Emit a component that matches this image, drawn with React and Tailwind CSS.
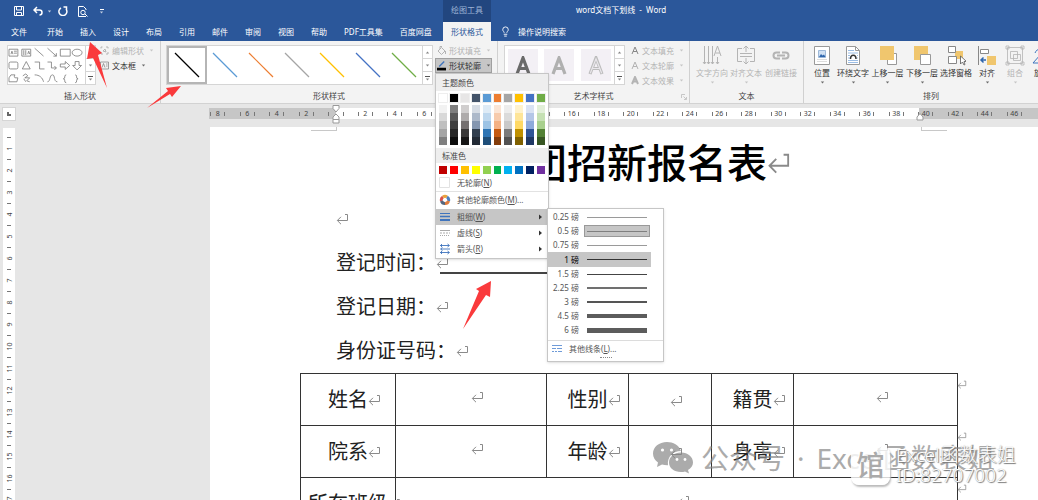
import { Lightbulb } from "lucide-react";

const tabs = ["文件", "开始", "插入", "设计", "布局", "引用", "邮件", "审阅", "视图", "帮助", "PDF工具集", "百度网盘"];

const lineStyles = [
  "text-black",
  "text-[#5b9bd5]",
  "text-[#ed7d31]",
  "text-[#a5a5a5]",
  "text-[#ffc000]",
  "text-[#4472c4]",
  "text-[#70ad47]",
];

const themeColors = [
  ["bg-white", "bg-[#f2f2f2]", "bg-[#d8d8d8]", "bg-[#bfbfbf]", "bg-[#a5a5a5]", "bg-[#7f7f7f]"],
  ["bg-black", "bg-[#7f7f7f]", "bg-[#595959]", "bg-[#3f3f3f]", "bg-[#262626]", "bg-[#0c0c0c]"],
  ["bg-[#e7e6e6]", "bg-[#d0cece]", "bg-[#aeabab]", "bg-[#757070]", "bg-[#3a3838]", "bg-[#171616]"],
  ["bg-[#44546a]", "bg-[#d6dce4]", "bg-[#adb9ca]", "bg-[#8496b0]", "bg-[#323f4f]", "bg-[#222a35]"],
  ["bg-[#5b9bd5]", "bg-[#deebf6]", "bg-[#bdd7ee]", "bg-[#9cc3e5]", "bg-[#2e75b5]", "bg-[#1e4e79]"],
  ["bg-[#ed7d31]", "bg-[#fbe5d5]", "bg-[#f7cbac]", "bg-[#f4b183]", "bg-[#c55a11]", "bg-[#833c0b]"],
  ["bg-[#a5a5a5]", "bg-[#ededed]", "bg-[#dbdbdb]", "bg-[#c9c9c9]", "bg-[#7b7b7b]", "bg-[#525252]"],
  ["bg-[#ffc000]", "bg-[#fff2cc]", "bg-[#fee599]", "bg-[#ffd965]", "bg-[#bf9000]", "bg-[#7f6000]"],
  ["bg-[#4472c4]", "bg-[#d9e2f3]", "bg-[#b4c6e7]", "bg-[#8eaadb]", "bg-[#2f5496]", "bg-[#1f3864]"],
  ["bg-[#70ad47]", "bg-[#e2efd9]", "bg-[#c5e0b3]", "bg-[#a8d08d]", "bg-[#538135]", "bg-[#375623]"],
];

const standardColors = [
  "bg-[#c00000]",
  "bg-[#ff0000]",
  "bg-[#ffc000]",
  "bg-[#ffff00]",
  "bg-[#92d050]",
  "bg-[#00b050]",
  "bg-[#00b0f0]",
  "bg-[#0070c0]",
  "bg-[#002060]",
  "bg-[#7030a0]",
];

const weights = [
  { label: "0.25 磅", line: "h-px bg-[#9a9a9a]" },
  { label: "0.5 磅", line: "h-px bg-[#808080]", current: true },
  { label: "0.75 磅", line: "h-px bg-[#9a9a9a]" },
  { label: "1 磅", line: "h-px bg-[#333]", hover: true },
  { label: "1.5 磅", line: "h-px bg-[#444]" },
  { label: "2.25 磅", line: "h-[2px] bg-[#707070]" },
  { label: "3 磅", line: "h-[2px] bg-[#555]" },
  { label: "4.5 磅", line: "h-[4px] bg-[#5c5c5c]" },
  { label: "6 磅", line: "h-[5px] bg-[#5c5c5c]" },
];

const Caret = ({ className = "" }) => (
  <svg viewBox="0 0 5 3" className={`h-[3px] w-[5px] shrink-0 opacity-70 ${className}`} aria-hidden="true">
    <path d="M0.8 0.5h3.4L2.5 2.4z" fill="currentColor" />
  </svg>
);

const ReturnMark = ({ className = "h-[12px] w-[13px]" }) => (
  <svg viewBox="0 0 13 12" className={`inline-block shrink-0 text-[#8a8a8a] ${className}`} fill="none" stroke="currentColor" aria-hidden="true">
    <path d="M9 1.5h2.5v6H1.5M5 3.8L1.3 7.5L5 11.2" />
  </svg>
);

const GalleryScroll = () => (
  <div className="flex w-[10px] shrink-0 flex-col border-l border-[#d5d5d5] text-[#555]">
    <button aria-label="上一行" className="flex flex-1 items-center justify-center border-b border-[#d5d5d5]">
      <Caret className="rotate-180" />
    </button>
    <button aria-label="下一行" className="flex flex-1 items-center justify-center border-b border-[#d5d5d5]">
      <Caret />
    </button>
    <button aria-label="其他" className="flex flex-1 flex-col items-center justify-center gap-px">
      <span className="h-px w-[5px] bg-[#555]" />
      <Caret />
    </button>
  </div>
);

const Group = ({ label, className = "", launcher, children }) => (
  <section className={`flex shrink-0 flex-col border-r border-[#d0d0d0] ${className}`}>
    <div className="flex h-[48px] items-start pt-[2px]">{children}</div>
    <div className="relative h-[14px] text-center leading-[14px] text-[#444]">
      {label}
      {launcher && (
        <svg viewBox="0 0 6 6" className="absolute right-[2px] bottom-[3px] size-[6px]" fill="none" stroke="#bbb" strokeWidth="0.8" aria-hidden="true">
          <path d="M0.5 4V0.5H4M2.5 2.5L5 5M5.5 3v2.5H3" />
        </svg>
      )}
    </div>
  </section>
);

const SmallButton = ({ icon, label, disabled, className = "" }) => (
  <button
    disabled={disabled}
    className={`flex h-[15px] items-center gap-[3px] whitespace-nowrap ${disabled ? "text-[#b4b4b4]" : "text-[#333]"} ${className}`}
  >
    {icon}
    <span>{label}</span>
    <Caret className="ml-[2px]" />
  </button>
);

const BigButton = ({ icon, label, disabled, caret = true, className = "w-[34px]" }) => (
  <button className={`flex shrink-0 flex-col items-center whitespace-nowrap ${disabled ? "text-[#b4b4b4]" : "text-[#333]"} ${className}`} disabled={disabled}>
    <svg viewBox="0 0 20 21" className="h-[21px] w-[20px]" fill="none" stroke="currentColor" aria-hidden="true">
      {icon}
    </svg>
    <span className="leading-[14px]">{label}</span>
    {caret && <Caret className="mt-[1px]" />}
  </button>
);

const ShapeGallery = () => (
  <div className="mt-[2px] ml-[7px] flex h-[40px] w-[89px] border border-[#d5d5d5] bg-white">
    <svg viewBox="0 0 78 38" className="h-[38px] w-[78px]" fill="none" stroke="#777" strokeWidth="0.8" aria-hidden="true">
      <path d="M1 3h9v7H1zM3 8l1-3l1 3M6 5h3M6 7h3M14 3h9v7h-9zM16 4v5M18 4v5M20 8l1-3l1 3" />
      <path d="M27 2l9 8M40 2l9 8M49 7v3h-3" />
      <path d="M53 3h10v7H53z" />
      <ellipse cx="70" cy="6.5" rx="5" ry="3.5" />
      <rect x="1" y="16" width="9" height="7" rx="1.5" />
      <path d="M14.5 23L18.5 15.5L22.5 23zM27 16h5v7h5M40 16h4v6h5M47 20l2 2l-2 2" />
      <path d="M53 18h5v-2.500l4.500 4l-4.500 4V21h-5zM68 15.500h4v4h2.500L70 24l-4.500-4.500H68z" />
      <path d="M3 29h4c-1 2-1 3 1 3h2l-1 4H1v-4zM15 30l3-2l2 2l-3 2l5 0l-3 3l3 1M16 33l2 3M27 29c5 0 8 3 9 7M40 36c3 0 2-7 5-7s1 7 5 7" />
      <path d="M59 29c-3 0 0 4-3 4c3 0 0 4 3 4M68 29c3 0 0 4 3 4c-3 0 0 4-3 4" />
    </svg>
    <GalleryScroll />
  </div>
);

const SwatchRow = ({ children }) => <div className="flex gap-[3px] px-[3px]">{children}</div>;

const MenuItem = ({ icon, label, accel, tail = "", arrow, active }) => (
  <button role="menuitem" className={`flex h-[16px] w-full items-center pl-[3px] text-left text-[#555] ${active ? "bg-[#c6c6c6]" : ""}`}>
    <svg viewBox="0 0 12 12" className="size-[12px]" fill="none" aria-hidden="true">
      {icon}
    </svg>
    <span className="ml-[6px] flex-1">
      {label}(<u>{accel}</u>){tail}
    </span>
    {arrow && (
      <svg viewBox="0 0 3 6" className="mr-[6px] h-[6px] w-[3px]" aria-hidden="true">
        <path d="M0 0.5L3 3L0 5.5z" fill="#333" />
      </svg>
    )}
  </button>
);

const WeightMenu = () => (
  <div role="menu" className="absolute top-[134px] left-full -ml-px w-[117px] border border-[#c6c6c6] bg-white pt-px shadow-sm">
    <div className="flex flex-col">
      {weights.map((w) => (
        <button
          key={w.label}
          role="menuitem"
          className={`mr-[12px] flex items-center ${w.hover ? "h-[15px] bg-[#c6c6c6] font-medium text-[#222]" : "h-[14px] text-[#555]"}`}
        >
          <span className="w-[31px] text-right">{w.label}</span>
          <span className={`ml-[5px] flex h-[12px] w-[66px] items-center px-[2px] ${w.current ? "border border-[#999] bg-[#c6c6c6]" : "border border-transparent"}`}>
            <span className={`w-full ${w.line}`} />
          </span>
        </button>
      ))}
    </div>
    <div className="mt-[3px] border-t border-[#dcdcdc]">
      <MenuItem
        icon={<path d="M1 2.500h10M1 5.500h4m1 0h5M1 8.500h2m1 0h2m1 0h4" stroke="#6f9bd8" />}
        label="其他线条"
        accel="L"
        tail="..."
      />
    </div>
    <div className="pb-[3px]">
      <span className="mx-auto block w-[12px] border-t border-dotted border-[#888]" />
    </div>
  </div>
);

const OutlineMenu = () => (
  <div role="menu" className="absolute top-full left-0 z-20 w-[114px] border border-[#c6c6c6] bg-white pb-px shadow-sm">
    <div className="mb-[3px] h-[17px] bg-[#eee] pl-[6px] leading-[17px] text-[#444]">主题颜色</div>
    <SwatchRow>
      {themeColors.map(([base]) => (
        <button key={base} aria-label="主题颜色" className={`size-[8px] outline outline-[#eee] ${base}`} />
      ))}
    </SwatchRow>
    <div className="h-[3px]" />
    <SwatchRow>
      {themeColors.map(([base, ...tints]) => (
        <div key={base} className="flex w-[8px] flex-col">
          {tints.map((tint) => (
            <button key={tint} aria-label="主题颜色" className={`h-[8px] ${tint}`} />
          ))}
        </div>
      ))}
    </SwatchRow>
    <div className="my-[3px] h-[15px] bg-[#eee] pl-[6px] leading-[15px] text-[#444]">标准色</div>
    <SwatchRow>
      {standardColors.map((color) => (
        <button key={color} aria-label="标准色" className={`size-[8px] ${color}`} />
      ))}
    </SwatchRow>
    <div className="border-b border-[#e2e2e2] pt-px">
      <MenuItem icon={<path d="M0.5 0.5h10v10h-10z" stroke="#e2e2e2" />} label="无轮廓" accel="N" />
    </div>
    <div className="pb-px">
      <MenuItem
        icon={
          <g strokeWidth="3">
            <path d="M2.5 7A3.5 3.5 0 0 1 4 3" stroke="#d9534a" />
            <path d="M4 3A3.5 3.5 0 0 1 8 3" stroke="#e9a23b" />
            <path d="M8 3A3.5 3.5 0 0 1 9.5 7" stroke="#4a7fc1" />
            <path d="M9.5 7A3.5 3.5 0 0 1 6 9.5" stroke="#e07b3c" />
            <path d="M6 9.5A3.5 3.5 0 0 1 2.5 7" stroke="#55657d" />
          </g>
        }
        label="其他轮廓颜色"
        accel="M"
        tail="..."
      />
    </div>
    <MenuItem
      icon={
        <g stroke="#3f74bd">
          <path d="M1 2.5h10" />
          <path d="M1 5.5h10" strokeWidth="1.5" />
          <path d="M1 9h10" strokeWidth="2" />
        </g>
      }
      label="粗细"
      accel="W"
      arrow
      active
    />
    <MenuItem
      icon={<path d="M1 3.5h10M1 6h2m1 0h2m1 0h2m1 0h1M1 8.5h1m1 0h1m1 0h1m1 0h1m1 0h1" stroke="#aaa" />}
      label="虚线"
      accel="S"
      arrow
    />
    <MenuItem
      icon={<path d="M1 2.5h9M8.5 1l2 1.500l-2 1.500M11 6H2M3.500 4.500l-2 1.500l2 1.500M1 9.500h9M8.500 8l2 1.500l-2 1.500M2.500 8v3M2.500 1v3" stroke="#3f74bd" strokeWidth="0.9" />}
      label="箭头"
      accel="R"
      arrow
    />
    <WeightMenu />
  </div>
);

const WordArt = ({ className, hollow }) => (
  <button className="flex h-[32px] w-[30px] items-center justify-center bg-[#f3f0f5]" aria-label="艺术字">
    <svg viewBox="0 0 16 19" className={`h-[19px] w-[16px] ${className}`} fill="none" aria-hidden="true">
      <path d="M2 18L8 2L14 18M4.500 12.500h7" stroke="currentColor" strokeWidth="3.2" />
      {hollow && <path d="M2.300 17.200L8 2.800L13.700 17.200M4.500 12.500h7" stroke="#e9e6eb" strokeWidth="1.2" />}
    </svg>
  </button>
);

const LetterIcon = ({ className = "" }) => (
  <svg viewBox="0 0 8 9" className="h-[9px] w-[8px]" fill="none" stroke="currentColor" aria-hidden="true">
    <path d="M1 8L4 1L7 8M2 5.5h4" className={className} />
  </svg>
);

const Ribbon = () => (
  <div className="relative z-10 flex h-[63px] border-b border-[#d2d2d2] bg-[#f3f3f3]">
    <Group label="插入形状" className="w-[161px]">
      <ShapeGallery />
      <div className="ml-[4px]">
        <SmallButton
          disabled
          label="编辑形状"
          icon={
            <svg viewBox="0 0 9 9" className="size-[9px]" fill="none" stroke="currentColor" aria-hidden="true">
              <path d="M1 2.5V1h1.500M6 1h2v1.500M8 6v2H6M3 8H1V6M3 5l2-2l1 3z" />
            </svg>
          }
        />
        <SmallButton
          label="文本框"
          icon={
            <svg viewBox="0 0 9 9" className="size-[9px]" fill="none" stroke="#888" aria-hidden="true">
              <path d="M0.5 1h8v7h-8zM2 6.500l1.500-4l1.500 4M6 3h1.500M6 5h1.500" strokeWidth="0.8" />
            </svg>
          }
        />
      </div>
    </Group>

    <Group label="形状样式" className="w-[337px]">
      <div className="mt-[2px] ml-[5px] flex h-[40px] w-[267px] border border-[#d5d5d5] bg-white">
        <div className="flex flex-1">
          {lineStyles.map((color, i) => (
            <button
              key={color}
              aria-label="线条样式"
              className={`flex flex-1 items-center justify-center ${i === 0 ? "border-2 border-[#b5b5b5]" : ""}`}
            >
              <svg viewBox="0 0 26 26" className={`size-[26px] shrink-0 ${color}`} aria-hidden="true">
                <path d="M1 1L25 25" stroke="currentColor" strokeWidth="1.2" />
              </svg>
            </button>
          ))}
        </div>
        <GalleryScroll />
      </div>
      <div className="ml-[2px] w-[57px]">
        <SmallButton
          disabled
          className="pl-[2px]"
          label="形状填充"
          icon={
            <svg viewBox="0 0 9 9" className="size-[9px]" fill="none" stroke="currentColor" aria-hidden="true">
              <path d="M1 5l3.500-3.500L8 5L4.500 8.500zM3 3V0.500h2M8.500 5v3" />
            </svg>
          }
        />
        <div className="relative">
          <SmallButton
            className="w-[57px] border border-[#a0a0a0] bg-[#c6c6c6] pl-[1px]"
            label="形状轮廓"
            icon={
              <svg viewBox="0 0 10 11" className="h-[11px] w-[10px]" fill="none" aria-hidden="true">
                <path d="M2.5 6.5L8 1" stroke="#3f74bd" strokeWidth="1.5" />
                <path d="M0 8h10v3H0z" fill="#000" />
              </svg>
            }
          />
          <OutlineMenu />
        </div>
      </div>
    </Group>

    <Group label="艺术字样式" className="w-[192px]" launcher>
      <div className="mt-[2px] ml-[6px] flex h-[40px] w-[121px] border border-[#d5d5d5] bg-white">
        <div className="flex flex-1 items-center justify-around">
          <WordArt className="text-[#6a6a6a]" />
          <WordArt className="text-[#b0b0b0]" />
          <WordArt className="text-[#bcbcbc]" hollow />
        </div>
        <GalleryScroll />
      </div>
      <div className="ml-[6px]">
        <SmallButton disabled label="文本填充" icon={<LetterIcon className="stroke-[#888]" />} />
        <SmallButton disabled label="文本轮廓" icon={<LetterIcon />} />
        <SmallButton disabled label="文本效果" icon={<LetterIcon className="stroke-2" />} />
      </div>
    </Group>

    <Group label="文本" className="w-[114px]">
      <div className="mt-[2px] ml-[5px] flex">
        <BigButton disabled label="文字方向" icon={<path d="M2.500 1v18M6.500 1v18M10.500 1v18M1 17l1.500 2l1.500-2M5 17l1.500 2l1.500-2M9 17l1.500 2l1.500-2M12 11l3.500-10L19 11M13.500 8h4.500M15.500 12v7M14 17l1.500 2l1.500-2" />} />
        <BigButton disabled label="对齐文本" icon={<path d="M6 3.500H1.500v13H6M14 3.500h4.500v13H14M4 8.500h12M4 11.500h12M10 1v6M7.500 3.500L10 1l2.500 2.500M10 13v6M7.500 16.500L10 19l2.500-2.500" />} />
        <BigButton disabled caret={false} label="创建链接" className="w-[36px]" icon={<path d="M9 7.500H5.500a3 3 0 0 0 0 6H9M11 7.500h3.500a3 3 0 0 1 0 6H11M6 10.500h8" strokeWidth="2" />} />
      </div>
    </Group>

    <Group label="排列" className="w-[255px]">
      <div className="mt-[2px] ml-[4px] flex">
        <BigButton
          label="位置"
          className="w-[28px]"
          icon={
            <g stroke="#999">
              <path d="M2.500 1.500h15v18h-15z" fill="#fff" />
              <path d="M5 14.500h10M5 16.500h10" stroke="#ddd" />
              <path d="M6.500 5.500h7v7h-7z" fill="#cfe0f3" stroke="#9db8d8" />
              <path d="M7 12l2-3l1.500 1.500l1.500-1l1.500 2.500z" fill="#2f66ad" stroke="none" />
            </g>
          }
        />
        <BigButton
          label="环绕文字"
          icon={
            <g stroke="#999">
              <path d="M3.500 1.500h9l4 4v14h-13z" fill="#fff" />
              <path d="M12.500 1.500v4h4" />
              <path d="M5 5.500h6M5 8h10M5 15.500h10M5 17.500h10M5 10.500h2M5 13h2M14 10.500h1M14 13h1" stroke="#9bbde4" />
              <path d="M7.500 14c0-5 5.500-5 5.500 0" stroke="#333" strokeWidth="1.5" />
            </g>
          }
        />
        <BigButton
          label="上移一层"
          className="w-[35px]"
          icon={
            <g stroke="#999">
              <path d="M9.500 8.500h9v11h-9z" fill="#fff" />
              <path d="M2 1h14v14H2z" fill="#f0c66e" stroke="none" />
            </g>
          }
        />
        <BigButton
          label="下移一层"
          icon={
            <g stroke="#999">
              <path d="M2 1h14v14H2z" fill="#f0c66e" stroke="none" />
              <path d="M8.500 9.500h10v10h-10z" fill="#fff" />
            </g>
          }
        />
        <BigButton
          caret={false}
          label="选择窗格"
          icon={
            <g stroke="#888">
              <path d="M9 6h8v8H9z" fill="#f0c66e" stroke="none" />
              <path d="M2.500 1.500h7v6h-7zM2.500 11.500h8v7h-8z" fill="#fff" />
              <path d="M14.500 11v8l2-2l1.500 3l1-.5l-1-3h2.500z" fill="#fff" stroke="#555" strokeWidth="0.8" />
            </g>
          }
        />
        <BigButton
          label="对齐"
          className="w-[28px]"
          icon={
            <g stroke="#888">
              <path d="M1.500 1v19" />
              <path d="M3.500 4.500h8v4h-8z" fill="#fff" />
              <path d="M10 11h9v9h-9z" fill="#f0c66e" stroke="none" />
              <path d="M9 15H4M6.500 12.500L4 15l2.500 2.500" stroke="#2f66ad" strokeWidth="1.5" />
            </g>
          }
        />
        <BigButton disabled label="组合" className="w-[28px]" icon={<path d="M2.500 2.500h15v16h-15zM5.500 6.500h7v7h-7zM8.500 9.500h7v6h-7zM1 1h3v3H1zM16 1h3v3h-3zM1 17h3v3H1zM16 17h3v3h-3z" strokeWidth="0.8" />} />
        <BigButton label="旋转" className="w-[26px]" icon={<path d="M3 8c2-5 8-6 12-2M11 6h4V2M1 18h16L9 9z" stroke="#3f74bd" />} />
      </div>
    </Group>
  </div>
);

const rulerNumbers = [8, 6, 4, 2, "", ...Array.from({ length: 23 }, (_, i) => (i + 1) * 2)];
const rulerPairs = Array.from({ length: 14 }, (_, i) => rulerNumbers.slice(i * 2, i * 2 + 2));

const HorizontalRuler = () => (
  <div className="flex h-[19px] shrink-0 items-center">
    <button aria-label="制表符" className="ml-[2px] flex size-[14px] items-center justify-center border border-[#d5d5d5] bg-white">
      <span className="size-[4px] border-b-2 border-l-2 border-[#666]" />
    </button>
    <div className="relative ml-[193px] min-w-0 flex-1">
      <div className="flex h-[11px] overflow-hidden bg-[linear-gradient(to_right,#c6c6c6_127px,#fff_127px,#fff_710px,#c6c6c6_710px)] text-[7px] text-[#444]">
        <div className="-ml-[6px] flex">
          {rulerPairs.map((pair, i) => (
            <div key={i} className="grid w-[59px] shrink-0 grid-cols-2">
              {pair.map((n) => (
                <span key={n} className="flex items-center justify-between px-[7px] leading-[11px]">
                  <i className="h-[4px] w-px bg-[#777]" />
                  {n}
                  <i className="h-[4px] w-px bg-[#777]" />
                </span>
              ))}
            </div>
          ))}
        </div>
      </div>
      <svg viewBox="0 0 8 19" className="absolute -top-[3px] left-[123px] h-[19px] w-[8px]" fill="#fff" stroke="#999" aria-hidden="true">
        <path d="M1 0.500h6v3L4 7L1 3.500zM4 9L7 12v2.500H1V12zM1 14.500h6v3.500H1z" />
      </svg>
      <svg viewBox="0 0 8 8" className="absolute top-[5px] left-[707px] size-[8px]" fill="#fff" stroke="#999" aria-hidden="true">
        <path d="M4 0.500L7 4v3H1V4z" />
      </svg>
    </div>
  </div>
);

const VerticalRuler = () => (
  <div className="mt-[5px] ml-[3px] flex w-[12px] shrink-0 flex-col items-center overflow-hidden bg-white pt-[3px] text-[7px] text-[#444]">
    {Array.from({ length: 17 }, (_, i) => (
      <div key={i} className="flex h-[22px] shrink-0 flex-col items-center">
        <i className="mt-[6px] h-px w-[4px] shrink-0 bg-[#777]" />
        <span className="flex h-[21px] w-[12px] shrink-0 -rotate-90 items-center justify-center leading-none">{i + 1}</span>
      </div>
    ))}
  </div>
);

const Field = ({ children }) => <p className="relative flex h-[44px] items-center">{children}</p>;

// the paragraph mark hangs after the text, so it does not count for centring
const Cell = ({ children, raised, end, colSpan }) => (
  <td colSpan={colSpan} className={`relative h-[52px] border border-[#333] p-0 text-center ${raised ? "pb-[8px]" : ""}`}>
    <span className="inline-flex items-center justify-center whitespace-nowrap">
      {children}
      <ReturnMark className="-mr-[13px] h-[12px] w-[13px]" />
    </span>
    {end && <ReturnMark className="absolute top-[6px] left-full h-[9px] w-[10px]" />}
  </td>
);

const Page = () => (
  <main className="relative mt-[4px] min-w-0 flex-1 bg-white text-[20px] text-[#222]">
    <div className="pr-[120px] pl-[126px]">
      <span className="absolute top-0 left-[101px] h-[4px] w-[26px] border-r border-b border-[#c8c8c8]" />
      <span className="absolute top-0 left-[711px] h-[4px] w-[26px] border-b border-l border-[#c8c8c8]" />
      <h1 className="flex h-[70px] items-center justify-center pt-[2px] text-[40px] leading-none font-medium whitespace-nowrap text-black">
        社团招新报名表
        <ReturnMark className="-mr-[24px] h-[22px] w-[24px]" />
      </h1>
      <Field>
        <ReturnMark />
      </Field>
      <Field>
        登记时间：
        <ReturnMark />
        <span className="absolute bottom-[11px] left-[104px] w-[120px] border-b-2 border-[#444]" />
      </Field>
      <Field>
        登记日期：
        <ReturnMark />
      </Field>
      <Field>
        身份证号码：
        <ReturnMark />
      </Field>
    </div>
    <div className="pr-[80px] pl-[90px]">
      <table className="w-full table-fixed border-collapse">
        <colgroup>
          <col className="w-[95px]" />
          <col className="w-[151px]" />
          <col className="w-[82px]" />
          <col className="w-[83px]" />
          <col className="w-[82px]" />
          <col />
        </colgroup>
        <tbody>
          <tr>
            <Cell>姓名</Cell>
            <Cell raised />
            <Cell>性别</Cell>
            <Cell />
            <Cell>籍贯</Cell>
            <Cell raised end />
          </tr>
          <tr>
            <Cell>院系</Cell>
            <Cell raised />
            <Cell>年龄</Cell>
            <Cell />
            <Cell>身高</Cell>
            <Cell raised end />
          </tr>
          <tr>
            <Cell>所在班级</Cell>
            <Cell raised end colSpan={5} />
          </tr>
        </tbody>
      </table>
    </div>
  </main>
);

const Arrow = ({ className, viewBox, points }) => (
  <svg viewBox={viewBox} className={`pointer-events-none absolute z-30 ${className}`} aria-hidden="true">
    <polygon points={points} fill="#fa3a3c" />
  </svg>
);

const Watermarks = () => (
  <>
    <div className="pointer-events-none absolute top-[438px] left-[653px] z-10 flex items-center gap-[8px] whitespace-nowrap text-[#888] opacity-70">
      <svg viewBox="0 0 40 34" className="h-[34px] w-[40px]" aria-hidden="true">
        <path d="M14 1C6 1 0 6 0 12.500c0 4 2 7 5 9L4 26l5-2.500c2 .5 4 .8 6 .7C14 16 20 10 28 10C26 4 20 1 14 1z" fill="currentColor" />
        <path d="M28 11.500c-7 0-12 4.500-12 10S21 31 28 31c1.500 0 3-.2 4-.6l4 2.100l-1-3.500c3-2 5-4.500 5-7.500c0-5.500-5-10-12-10z" fill="currentColor" />
        <g fill="#fff">
          <circle cx="9.500" cy="9" r="1.600" />
          <circle cx="18.500" cy="9" r="1.600" />
          <circle cx="24" cy="18.500" r="1.400" />
          <circle cx="32" cy="18.500" r="1.400" />
        </g>
      </svg>
      <span className="flex gap-[12px] text-[28px] leading-[40px]">
        <span>公众号</span>
        <span>·</span>
        <span>Excel函数表姐</span>
      </span>
    </div>
    <div className="pointer-events-none absolute top-[445px] left-[851px] z-10 flex items-center gap-[6px] whitespace-nowrap">
      <span className="flex size-[39px] items-center justify-center rounded-lg bg-white/80 text-[28px] font-medium text-[#aaa] shadow-[1px_2px_2px_#bbb]">馆</span>
      <span className="text-[19px] leading-[20px] font-light text-white [text-shadow:1px_1px_1px_#777,0_0_1px_#999]">
        Excel函数表姐
        <br />
        ID:82707002
      </span>
    </div>
  </>
);

const TitleBar = () => (
  <header className="flex h-[22px] text-white">
    <div className="flex w-[443px] items-center pl-[14px]">
      <button aria-label="保存">
        <svg viewBox="0 0 10 10" className="size-[10px]" fill="none" stroke="currentColor" aria-hidden="true">
          <path d="M0.500 0.500h9v9h-9zM2.500 0.500v3.500h5V0.500M2.500 9.500V6.500h5v3" />
        </svg>
      </button>
      <button aria-label="撤消" className="ml-[9px] flex items-center gap-[4px]">
        <svg viewBox="0 0 10 10" className="size-[10px]" fill="none" stroke="currentColor" strokeWidth="1.5" aria-hidden="true">
          <path d="M4 1L1 4l3 3M1 4h5.500a2.500 2.500 0 0 1 0 5" />
        </svg>
        <Caret />
      </button>
      <button aria-label="重复" className="ml-[6px]">
        <svg viewBox="0 0 10 10" className="size-[10px]" fill="none" stroke="currentColor" strokeWidth="1.5" aria-hidden="true">
          <path d="M3 2A4 4 0 1 0 8 3M5.500 1h3v3" />
        </svg>
      </button>
      <button aria-label="打印预览" className="ml-[9px]">
        <svg viewBox="0 0 11 11" className="size-[11px]" fill="none" stroke="currentColor" aria-hidden="true">
          <path d="M9 10.500H1.500V0.500h5l2.500 2.500V4M8 8l2.500 2.500" />
          <circle cx="6" cy="6.500" r="2.200" />
        </svg>
      </button>
      <button aria-label="自定义" className="ml-[11px] flex flex-col items-center gap-px">
        <span className="h-px w-[4px] bg-white" />
        <Caret />
      </button>
    </div>
    <span className="w-[48px] bg-[#22467f] text-center leading-[19px] text-[#9db3d4]">绘图工具</span>
    <span className="ml-[85px] leading-[19px] whitespace-pre">word文档下划线{"  -  "}Word</span>
  </header>
);

export default function App() {
  return (
    <div className="relative flex h-screen flex-col overflow-hidden bg-[#e6e6e6] font-['Noto_Sans','Noto_Sans_CJK_SC',sans-serif] text-[8px]">
      <div className="shrink-0 bg-[#2b579a]">
        <TitleBar />
        <nav className="flex h-[19px] text-white">
          <div className="flex w-[443px] justify-between px-[11px]">
            {tabs.map((tab, i) => (
              <button key={tab} className={`whitespace-nowrap ${i === 0 ? "pr-[3px]" : ""}`}>
                {tab}
              </button>
            ))}
          </div>
          <button className="w-[48px] bg-[#f3f3f3] text-[#2b579a]">形状格式</button>
          <button className="ml-[9px] flex items-center gap-[7px]">
            <Lightbulb className="size-[11px]" />
            操作说明搜索
          </button>
        </nav>
      </div>
      <Ribbon />
      <HorizontalRuler />
      <div className="flex min-h-0 flex-1">
        <VerticalRuler />
        <div className="w-[195px] shrink-0" />
        <Page />
      </div>
      <Watermarks />
      <Arrow className="top-[42px] left-[86px] h-[47px] w-[22px]" viewBox="86 42 22 47" points="90,42 102,53 98,55 107,88 93,58 87,59" />
      <Arrow className="top-[85px] left-[146px] h-[24px] w-[36px]" viewBox="146 85 36 24" points="181,86 172,97 170,94 147,108 168,91 166,88" />
      <Arrow className="top-[281px] left-[462px] h-[49px] w-[30px]" viewBox="462 281 30 49" points="491,281 490,297 486,295 463,329 479,291 476,289" />
    </div>
  );
}
